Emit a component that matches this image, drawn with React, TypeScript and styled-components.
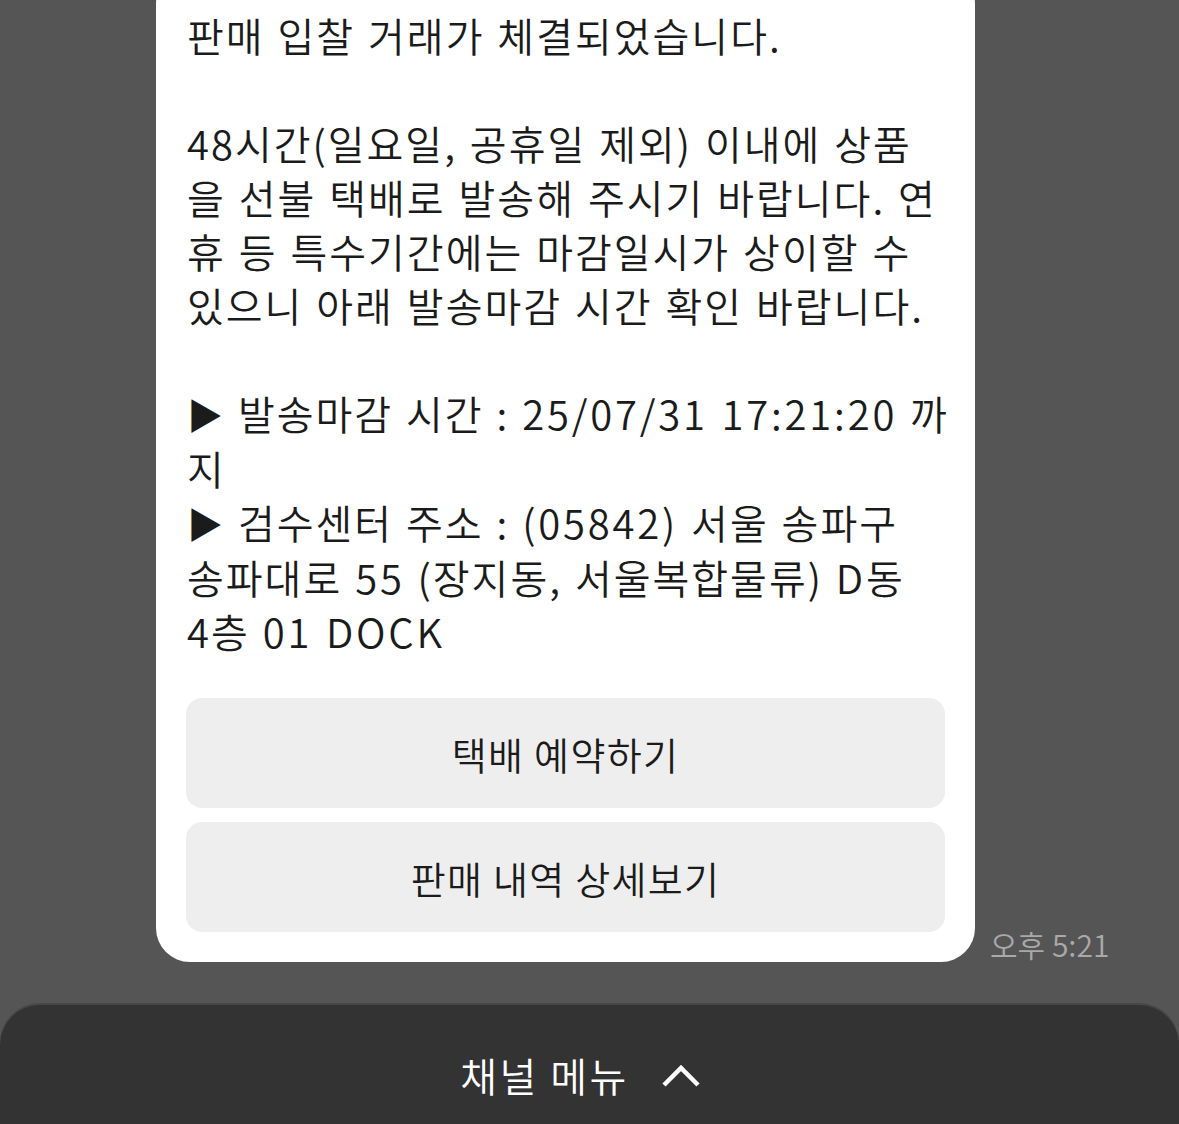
import React from "react";
import styled, { createGlobalStyle } from "styled-components";

const Global = createGlobalStyle`
  html, body { margin: 0; padding: 0; background: #555555; }
  body { font-family: "Noto Sans CJK KR", "Noto Sans", sans-serif; font-weight: 350; -webkit-font-smoothing: antialiased; }
`;

const Page = styled.div`
  width: 1179px;
  height: 1124px;
  overflow: hidden;
  display: flex;
  flex-direction: column;
  background: #555555;
`;

const ChatRow = styled.div`
  display: flex;
  align-items: flex-end;
  gap: 15px;
  padding-left: 156px;
`;

const Card = styled.div`
  width: 819px;
  box-sizing: border-box;
  margin-top: -30px;
  padding: 38px 30px 30px 30px;
  background: #ffffff;
  border-radius: 34px;
  display: flex;
  flex-direction: column;
`;

const Body = styled.div`
  font-size: 40px;
  line-height: 54px;
  letter-spacing: 2px;
  word-spacing: 2px;
  color: #1b1b1b;
  padding-left: 1px;
  margin-bottom: 40px;
`;

const Para = styled.div<{ $gap?: boolean }>`
  margin-bottom: ${(p) => (p.$gap ? "54px" : "0")};
`;

const Line = styled.div`
  white-space: nowrap;
`;

const Latin = styled.span`
  letter-spacing: 2.8px;
`;

const Marker = styled.span`
  font-size: 36px;
  letter-spacing: 0;
  margin-right: 2px;
`;

const Buttons = styled.div`
  display: flex;
  flex-direction: column;
  gap: 14px;
`;

const ActionButton = styled.button`
  height: 110px;
  border: none;
  border-radius: 16px;
  background: #eeeeee;
  color: #1b1b1b;
  font-family: inherit;
  font-weight: inherit;
  font-size: 38px;
  letter-spacing: 1.3px;
  padding: 0;
  cursor: pointer;
`;

const Time = styled.div`
  font-size: 30px;
  line-height: 30px;
  color: #a9a9a9;
  padding-bottom: 3px;
  white-space: nowrap;
`;

const MenuBar = styled.div`
  margin-top: auto;
  height: 119px;
  background: #333333;
  border-radius: 40px 40px 0 0;
  box-shadow: 0 -2px 0 #474747;
  display: flex;
  align-items: center;
  justify-content: center;
  gap: 32px;
  padding-right: 18px;
  padding-top: 20px;
  box-sizing: border-box;
`;

const MenuLabel = styled.span`
  color: #ffffff;
  font-size: 40px;
  letter-spacing: 2.5px;
  line-height: 1;
`;

const Chevron = () => (
  <svg width="40" height="26" viewBox="0 0 40 26" fill="none">
    <polyline points="3,23 20,6 37,23" stroke="#ffffff" strokeWidth="4.5" strokeLinecap="butt" strokeLinejoin="miter" />
  </svg>
);

export default function App() {
  return (
    <>
      <Global />
      <Page>
        <ChatRow>
          <Card>
            <Body>
              <Para $gap>
                <Line>판매 입찰 거래가 체결되었습니다.</Line>
              </Para>
              <Para $gap>
                <Line>48시간(일요일, 공휴일 제외) 이내에 상품</Line>
                <Line>을 선불 택배로 발송해 주시기 바랍니다. 연</Line>
                <Line>휴 등 특수기간에는 마감일시가 상이할 수</Line>
                <Line>있으니 아래 발송마감 시간 확인 바랍니다.</Line>
              </Para>
              <Para>
                <Line><Marker>▶</Marker> 발송마감 시간 : <Latin>25/07/31 17:21:20</Latin> 까</Line>
                <Line>지</Line>
                <Line><Marker>▶</Marker> 검수센터 주소 : <Latin>(05842)</Latin> 서울 송파구</Line>
                <Line>송파대로 <Latin>55</Latin> (장지동, 서울복합물류) <Latin>D</Latin>동</Line>
                <Line>4층 <Latin>01 DOCK</Latin></Line>
              </Para>
            </Body>
            <Buttons>
              <ActionButton>택배 예약하기</ActionButton>
              <ActionButton>판매 내역 상세보기</ActionButton>
            </Buttons>
          </Card>
          <Time>오후 5:21</Time>
        </ChatRow>
        <MenuBar>
          <MenuLabel>채널 메뉴</MenuLabel>
          <Chevron />
        </MenuBar>
      </Page>
    </>
  );
}
